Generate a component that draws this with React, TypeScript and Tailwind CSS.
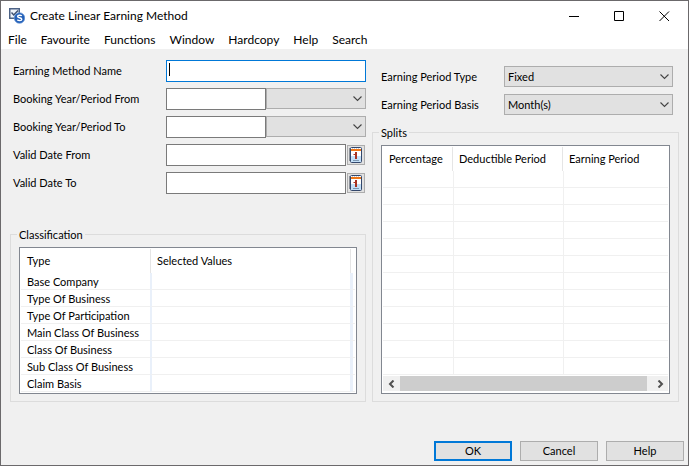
import type { ReactNode } from 'react';

const MENUS = ['File', 'Favourite', 'Functions', 'Window', 'Hardcopy', 'Help', 'Search'];

const CLASSIFICATIONS = [
  'Base Company',
  'Type Of Business',
  'Type Of Participation',
  'Main Class Of Business',
  'Class Of Business',
  'Sub Class Of Business',
  'Claim Basis',
];

const SPLIT_ROWS = Array.from({ length: 12 }, (_, i) => i);

const INPUT = 'h-[22px] min-w-0 border border-[#7a7a7a] bg-white px-1 outline-none';

function AppIcon() {
  return (
    <svg width="16" height="16" viewBox="0 0 16 16" aria-hidden="true">
      <rect x="0.75" y="0.75" width="9.5" height="9.5" fill="#eef3fa" stroke="#4c6285" strokeWidth="1.5" />
      <path d="M2.5 4.5 4.7 7 9 2.5" fill="none" stroke="#3c4f70" strokeWidth="1.4" />
      <circle cx="10.5" cy="10" r="5.3" fill="#2360b8" stroke="#6d9ad8" strokeWidth="0.7" />
      <path
        d="M12.8 7.9c-.8-.9-4.2-1.2-4.2.6 0 1.700 4.200.9 4.200 2.800 0 1.800-3.500 1.600-4.500.5"
        fill="none"
        stroke="#fff"
        strokeWidth="1.4"
      />
    </svg>
  );
}

function CalendarIcon() {
  return (
    <svg width="14" height="16" viewBox="0 0 14 16" aria-hidden="true">
      <path d="M0 1h2v13H0z" fill="#8b9099" />
      <rect x="1.5" y="0.5" width="11" height="15" rx="1" fill="#fff" stroke="#33476b" />
      <rect x="2" y="9" width="10" height="6" fill="#c3e0f8" />
      <rect x="2" y="2" width="10" height="2" fill="#f07818" />
      <path d="M3 1.500h1M5 1.500h1M7 1.500h1M9 1.500h1" stroke="#c9ced8" />
      <path d="M6 5h2v7H6V8H4.500V7H6z" fill="#a83424" />
      <path d="M4 13.500h6" stroke="#7d98b3" />
    </svg>
  );
}

function Select({ id, options, className }: { id: string; options: string[]; className: string }) {
  return (
    <div className={`relative h-[21px] ${className}`}>
      <select
        id={id}
        aria-label={id}
        className="block h-full w-full appearance-none border border-[#adadad] bg-[#e1e1e1] pt-px pr-5 pl-[3px] outline-none"
      >
        {options.map((o) => (
          <option key={o}>{o}</option>
        ))}
      </select>
      <svg
        className="pointer-events-none absolute top-2 right-1"
        width="9"
        height="6"
        viewBox="0 0 9 6"
        aria-hidden="true"
      >
        <path d="M0.500 0.500 4.500 4.500 8.500 0.500" fill="none" stroke="#444" strokeWidth="1.100" />
      </svg>
    </div>
  );
}

function Field({ id, label, children }: { id: string; label: string; children: ReactNode }) {
  return (
    <div className="flex h-[22px] pl-[3px]">
      <label htmlFor={id} className="w-[153px] shrink-0 leading-[22px]">
        {label}
      </label>
      {children}
    </div>
  );
}

function PeriodField({ id, label }: { id: string; label: string }) {
  return (
    <Field id={id} label={label}>
      <div className="grid flex-1 grid-cols-2">
        <input id={id} type="text" className={INPUT} />
        <Select id={`${id}-period`} options={['']} className="min-w-0" />
      </div>
    </Field>
  );
}

function DateField({ id, label }: { id: string; label: string }) {
  return (
    <Field id={id} label={label}>
      <input id={id} type="text" className={`${INPUT} flex-1`} />
      <button
        type="button"
        aria-label="Pick a date"
        className="mx-px flex h-5 w-[18px] items-center justify-center self-center border border-[#adadad] bg-[#e1e1e1]"
      >
        <CalendarIcon />
      </button>
    </Field>
  );
}

function Group({ title, className, children }: { title: string; className: string; children: ReactNode }) {
  return (
    <fieldset className={`min-w-0 border border-[#dcdcdc] px-2 pb-[7px] ${className}`}>
      <legend className="-ml-[2px] h-[14px] px-[2px] leading-4">{title}</legend>
      <div className="mt-[6px] border border-[#828790] bg-white px-px pt-px">{children}</div>
    </fieldset>
  );
}

export default function App() {
  return (
    <div className="flex min-h-screen flex-col border border-[#6b696b] bg-[#f0f0f0] font-['Lato','Liberation_Sans',sans-serif] text-[11px] text-black">
      <header className="bg-white text-[12px]">
        <div className="flex h-[30px] items-center pr-px pl-2">
          <AppIcon />
          <h1 className="ml-[5px] flex-1">Create Linear Earning Method</h1>
          <button type="button" aria-label="Minimize" className="flex h-full w-[45px] items-center justify-center">
            <svg width="11" height="11" viewBox="0 0 11 11">
              <path d="M0 5.500h10" stroke="#000" />
            </svg>
          </button>
          <button type="button" aria-label="Maximize" className="flex h-full w-[45px] items-center justify-center">
            <svg width="11" height="11" viewBox="0 0 11 11">
              <path d="M0.500 0.500h9v9h-9z" fill="none" stroke="#000" />
            </svg>
          </button>
          <button type="button" aria-label="Close" className="flex h-full w-[45px] items-center justify-center">
            <svg width="11" height="11" viewBox="0 0 11 11">
              <path d="M0.500 0.500l9.500 9.500M10 0.500l-9.500 9.500" stroke="#000" />
            </svg>
          </button>
        </div>
        <nav className="flex h-[18px] items-center gap-[14px] pl-[7px]">
          {MENUS.map((m) => (
            <button key={m} type="button" className="leading-5">
              {m}
            </button>
          ))}
        </nav>
      </header>

      <main className="grid grid-cols-[356fr_307fr] gap-[6px] px-[9px] pt-[11px]">
        <div className="flex min-w-0 flex-col">
          <div className="flex flex-col gap-[6px]">
            <Field id="name" label="Earning Method Name">
              <div className="relative flex flex-1">
                <input
                  id="name"
                  type="text"
                  className="h-[22px] min-w-0 flex-1 border border-[#0078d7] bg-white px-1 outline-none"
                />
                <span className="absolute top-[3px] left-[3px] h-[13px] w-px bg-black" />
              </div>
            </Field>
            <PeriodField id="from" label="Booking Year/Period From" />
            <PeriodField id="to" label="Booking Year/Period To" />
            <DateField id="valid-from" label="Valid Date From" />
            <DateField id="valid-to" label="Valid Date To" />
          </div>

          <Group title="Classification" className="mt-[33px]">
            <table className="mb-px w-full table-fixed border-separate border-spacing-0 text-left">
              <colgroup>
                <col className="w-[129px]" />
                <col />
                <col className="w-[5px]" />
              </colgroup>
              <thead>
                <tr className="h-6">
                  <th className="p-0 pl-[6px] font-normal">Type</th>
                  <th className="border-l border-[#e5e5e5] p-0 pl-[6px] font-normal">Selected Values</th>
                  <th className="border-l border-[#e5e5e5] p-0" />
                </tr>
              </thead>
              <tbody>
                {CLASSIFICATIONS.map((c) => (
                  <tr key={c} className="h-[17px] leading-[15px]">
                    <td className="border-b border-[#f0f0f0] p-0 pt-px pl-[6px] whitespace-nowrap">{c}</td>
                    <td className="border-b border-l-2 border-b-[#f0f0f0] border-l-[#e9f0fa] p-0" />
                    <td className="border-b border-l-[3px] border-b-[#f0f0f0] border-l-[#e9f0fa] p-0" />
                  </tr>
                ))}
              </tbody>
            </table>
          </Group>
        </div>

        <div className="flex min-w-0 flex-col pt-[6px]">
          <div className="flex flex-col gap-[7px] pr-[6px] pl-[9px]">
            <div className="flex h-[21px]">
              <label htmlFor="period-type" className="w-[123px] shrink-0 leading-[22px]">
                Earning Period Type
              </label>
              <Select id="period-type" options={['Fixed']} className="flex-1" />
            </div>
            <div className="flex h-[21px]">
              <label htmlFor="period-basis" className="w-[123px] shrink-0 leading-[22px]">
                Earning Period Basis
              </label>
              <Select id="period-basis" options={['Month(s)']} className="flex-1" />
            </div>
          </div>

          <Group title="Splits" className="mt-[10px]">
            <table className="w-full table-fixed border-separate border-spacing-0 text-left">
              <colgroup>
                <col className="w-[70px]" />
                <col className="w-[110px]" />
                <col />
              </colgroup>
              <thead>
                <tr className="h-6">
                  <th className="border-r border-[#e5e5e5] p-0 pl-[6px] font-normal">Percentage</th>
                  <th className="border-r border-[#e5e5e5] p-0 pl-[6px] font-normal">Deductible Period</th>
                  <th className="p-0 pl-[6px] font-normal">Earning Period</th>
                </tr>
              </thead>
              <tbody>
                {SPLIT_ROWS.map((r) => (
                  <tr key={r} className="h-[17px]">
                    <td className="border-b border-[#f0f0f0] p-0" />
                    <td className="border-b border-l border-[#f0f0f0] p-0" />
                    <td className="border-b border-l border-[#f0f0f0] p-0" />
                  </tr>
                ))}
              </tbody>
            </table>
            <div className="mt-px mb-[2px] flex h-[15px] bg-[#f0f0f0]">
              <button type="button" aria-label="Scroll left" className="flex w-[17px] items-center justify-center">
                <svg width="7" height="8" viewBox="0 0 7 8">
                  <path d="M5.500 0.500 2 4l3.500 3.500" fill="none" stroke="#505050" strokeWidth="2" />
                </svg>
              </button>
              <div className="flex-1 bg-[#cdcdcd]" />
              <button type="button" aria-label="Scroll right" className="flex w-[21px] items-center justify-end pr-1">
                <svg width="7" height="8" viewBox="0 0 7 8">
                  <path d="M1.500 0.500 5 4 1.500 7.500" fill="none" stroke="#505050" strokeWidth="2" />
                </svg>
              </button>
            </div>
          </Group>
        </div>
      </main>

      <footer className="mt-auto flex justify-end gap-2 pt-4 pr-1 pb-1">
        <button type="button" className="h-5 w-[78px] border-2 border-[#0078d7] bg-[#e1e1e1] leading-4">
          OK
        </button>
        <button type="button" className="h-5 w-[78px] border border-[#adadad] bg-[#e1e1e1] leading-4">
          Cancel
        </button>
        <button type="button" className="h-5 w-[78px] border border-[#adadad] bg-[#e1e1e1] leading-4">
          Help
        </button>
      </footer>
    </div>
  );
}
